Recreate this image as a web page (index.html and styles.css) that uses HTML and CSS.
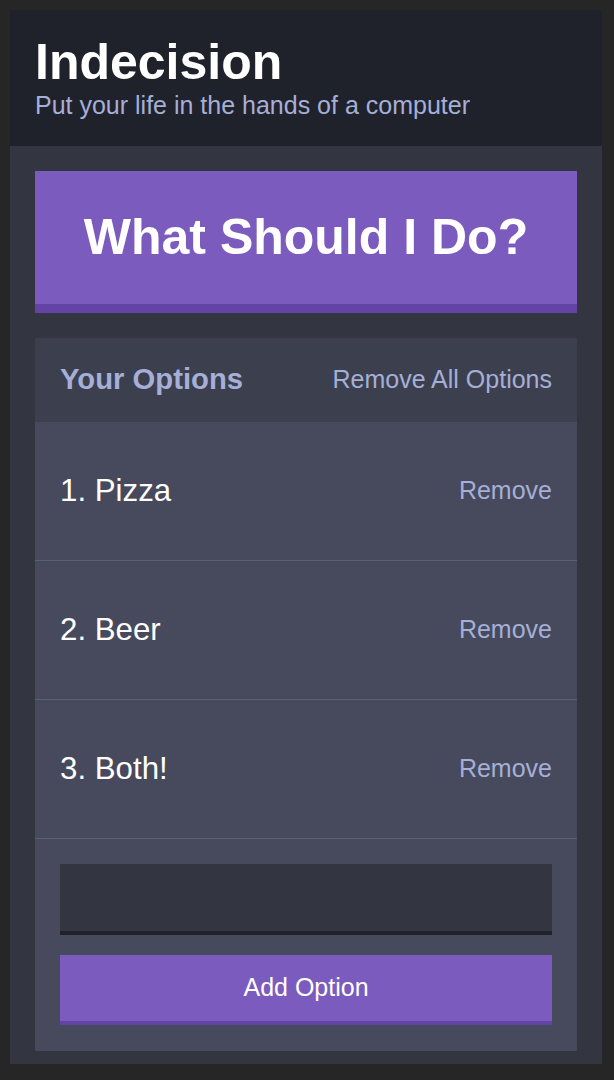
FILE: index.html
```html
<!DOCTYPE html>
<html lang="en">
<head>
<meta charset="utf-8">
<title>Indecision</title>
<link rel="stylesheet" href="styles.css">
</head>
<body>
<div class="screen">
  <div class="app">
    <header class="header">
      <h1 class="header__title">Indecision</h1>
      <h2 class="header__subtitle">Put your life in the hands of a computer</h2>
    </header>
    <main class="main">
      <button class="big-button">What Should I Do?</button>
      <section class="widget">
        <div class="widget-header">
          <h3 class="widget-header__title">Your Options</h3>
          <button class="button--link">Remove All Options</button>
        </div>
        <div class="option">
          <p class="option__text">1. Pizza</p>
          <button class="button--link">Remove</button>
        </div>
        <div class="option">
          <p class="option__text">2. Beer</p>
          <button class="button--link">Remove</button>
        </div>
        <div class="option">
          <p class="option__text">3. Both!</p>
          <button class="button--link">Remove</button>
        </div>
        <form class="add-option">
          <input class="add-option__input" type="text" name="option">
          <button class="button" type="button">Add Option</button>
        </form>
      </section>
    </main>
  </div>
</div>
</body>
</html>
```
FILE: styles.css
```css
* { box-sizing: border-box; }
html, body { margin: 0; padding: 0; }
body {
  background: #262626;
  font-family: "Liberation Sans", Arial, Helvetica, sans-serif;
  font-size: 25px;
  line-height: 1.15;
  color: #ffffff;
}
.screen {
  height: 1080px;
  padding: 10px 12px 16px 10px;
  overflow: hidden;
}
.app {
  height: 100%;
  background: #333641;
  display: flex;
  flex-direction: column;
}
.header {
  background: #20222b;
  padding: 25px;
  height: 136px;
}
.header__title {
  margin: 0;
  font-size: 50px;
  font-weight: bold;
  line-height: 55px;
  color: #ffffff;
}
.header__subtitle {
  margin: 0;
  font-size: 25px;
  font-weight: normal;
  line-height: 31px;
  color: #a5afd7;
}
.main {
  padding: 25px 25px 0;
  flex: 1;
}
.big-button {
  display: block;
  width: 100%;
  margin: 0 0 25px;
  background: #7b5bbe;
  border: none;
  border-bottom: 9.4px solid #6343a6;
  color: #ffffff;
  font-family: inherit;
  font-weight: bold;
  font-size: 50px;
  line-height: 1.15;
  padding: 37.5px 0;
}
.widget {
  background: #464a5c;
}
.widget-header {
  background: #3c404e;
  display: flex;
  justify-content: space-between;
  align-items: center;
  padding: 0 25px;
  height: 84px;
}
.widget-header__title {
  margin: 0;
  font-size: 29.25px;
  font-weight: bold;
  line-height: 1.15;
  color: #a5afd7;
}
.button--link {
  background: none;
  border: none;
  padding: 0;
  color: #a5afd7;
  font-family: inherit;
  font-size: 25px;
  line-height: 1.15;
}
.option {
  display: flex;
  justify-content: space-between;
  align-items: center;
  padding: 0 25px;
  border-bottom: 1px solid #5b5f76;
  height: 139px;
}
.option__text {
  margin: 0;
  font-size: 31.25px;
  line-height: 1.15;
  color: #ffffff;
}
.add-option {
  display: flex;
  flex-direction: column;
  gap: 20px;
  padding: 25px 25px 26px;
}
.add-option__input {
  display: block;
  width: 100%;
  height: 71px;
  background: #333641;
  border: none;
  border-bottom: 4.7px solid #20222b;
  color: #a5afd7;
  font-family: inherit;
  font-size: 25px;
  padding: 18.75px;
  outline: none;
}
.button {
  display: block;
  width: 100%;
  height: 70px;
  background: #7b5bbe;
  border: none;
  border-bottom: 4.7px solid #6343a6;
  color: #ffffff;
  font-family: inherit;
  font-size: 25px;
  line-height: 1.15;
  padding: 0;
}
```
